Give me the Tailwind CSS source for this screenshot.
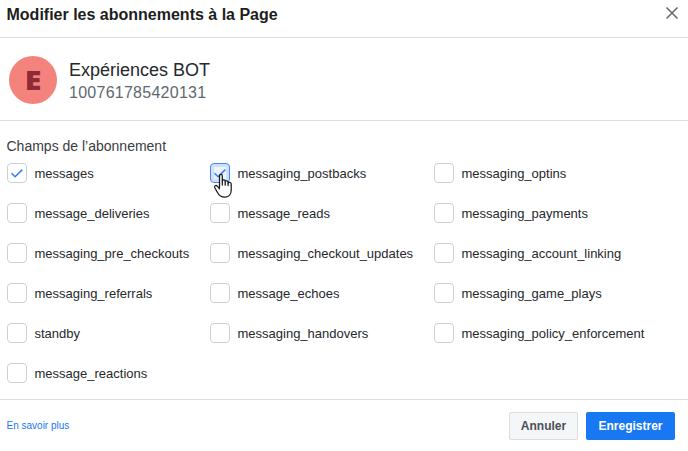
<!DOCTYPE html>
<html lang="fr">
<head>
<meta charset="utf-8">
<title>Modifier les abonnements à la Page</title>
<script src="https://cdn.jsdelivr.net/npm/@tailwindcss/browser@4"></script>
</head>
<body class="w-[688px] h-[451px] overflow-hidden bg-white font-['Liberation_Sans',Arial,sans-serif] text-[#1c1e21] flex flex-col">
<header class="h-[38px] shrink-0 border-b border-[#dadde1] flex justify-between pl-[6.5px] pr-[10px]">
  <h1 class="text-base leading-5 font-bold pt-[5px]">Modifier les abonnements à la Page</h1>
  <button aria-label="Fermer" class="w-3 h-3 mt-[7px]"><svg width="12" height="12" viewBox="0 0 12 12" fill="none" stroke="#606770" stroke-width="1.5"><path d="M.5 .5 11.5 11.5M11.5 .5 .5 11.5"/></svg></button>
</header>
<section class="h-[83px] shrink-0 border-b border-[#dadde1] flex items-start pt-[18px] pl-[9px] gap-3">
  <div class="size-12 rounded-full bg-[#f5837d] flex items-center justify-center"><span class="inline-block scale-x-[1.17] font-['Open_Sans',sans-serif] font-extrabold text-[26px] leading-none text-[#8f2b36]">E</span></div>
  <div class="pt-[3px]">
    <div class="text-lg leading-[22px] text-[#26282c]">Expériences BOT</div>
    <div class="text-base leading-[23px] tracking-[0.26px] text-[#606770]">100761785420131</div>
  </div>
</section>
<main class="h-[279px] shrink-0 border-b border-[#dadde1] pl-[7px] pt-[16px]">
  <h2 class="text-sm leading-[18px] text-[#393c41] -ml-[0.5px]">Champs de l’abonnement</h2>
  <div id="fields" class="grid grid-cols-[203px_224px_1fr] auto-rows-[20px] gap-y-5 mt-2 text-[13px] leading-5"></div>
</main>
<footer class="flex items-start pt-3 pl-[6.5px] pr-[13px]">
  <a class="text-[10px] leading-7 text-[#1877f2] mr-auto">En savoir plus</a>
  <button class="w-[69px] h-7 rounded-[2px] border border-[#dadde1] bg-[#f5f6f7] text-xs font-bold text-[#4b4f56] mr-2">Annuler</button>
  <button class="w-[89px] h-7 rounded-[2px] bg-[#1877f2] text-xs font-bold text-white">Enregistrer</button>
</footer>
<svg class="absolute left-[213px] top-[173px]" width="20" height="26" viewBox="0 0 20 26" fill="#fff" stroke="#16181c" stroke-width="1.25" stroke-linejoin="round" stroke-linecap="round"><path d="M6.5 14.5V3.2C6.5 .9 9.3 .9 9.3 3.2V8C9.3 6.4 12.2 6.4 12.2 8V8.8C12.2 7.3 15.1 7.4 15.1 9.2V10.2C15.1 8.8 18.2 9 18.2 11V17C18.2 21.5 15.5 24.2 11.7 24.2C8 24.2 5.8 22 4.5 19.5L1.8 14.8C.8 12.7 3 11.8 4.3 13.2L6.5 15.8"/><path fill="none" d="M9.3 8V12M12.2 8.8V12.2M15.1 10V12.5"/></svg>
<template id="check"><svg width="12" height="9" viewBox="0 0 12 9" fill="none" stroke="#2d7ff0" stroke-width="1.5"><path d="M.5 4.2 4.1 7.7 11.3 .6"/></svg></template>
<script>
const names = ["messages","messaging_postbacks","messaging_optins","message_deliveries","message_reads","messaging_payments","messaging_pre_checkouts","messaging_checkout_updates","messaging_account_linking","messaging_referrals","message_echoes","messaging_game_plays","standby","messaging_handovers","messaging_policy_enforcement","message_reactions"];
const check = document.getElementById("check").innerHTML;
document.getElementById("fields").innerHTML = names.map((n, i) =>
  `<label class="flex items-center gap-[7.5px]"><span class="size-5 shrink-0 rounded-[4px] border flex items-center justify-center ${i === 1 ? "border-[#4285f4] bg-[#edf3fc] shadow-[inset_0_0_0_3px_#d0e1fb]" : "border-[#ccd0d5] bg-white"}">${i < 2 ? check : ""}</span><span class="text-[#26282c] pt-[2px]">${n}</span></label>`).join("");
</script>
</body>
</html>
